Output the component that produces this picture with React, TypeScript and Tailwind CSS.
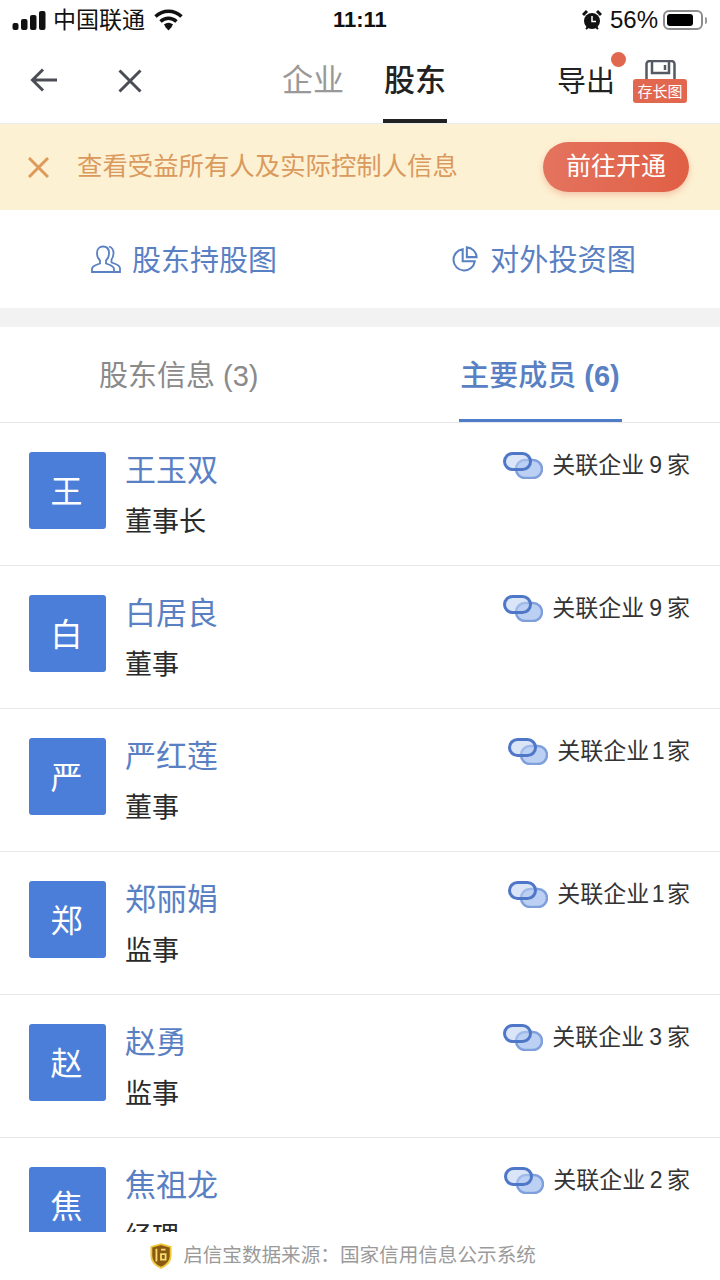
const cjk = "font-['Liberation_Sans','Noto_Sans_CJK_SC',sans-serif]";

type Member = {
  name: string;
  role: string;
  count: string;
  digit: string;
};

const members: Member[] = [
  { name: '王玉双', role: '董事长', count: '9', digit: 'mx-[5px]' },
  { name: '白居良', role: '董事', count: '9', digit: 'mx-[5px]' },
  { name: '严红莲', role: '董事', count: '1', digit: 'mx-[2.500px]' },
  { name: '郑丽娟', role: '监事', count: '1', digit: 'mx-[2.500px]' },
  { name: '赵勇', role: '监事', count: '3', digit: 'mx-[5px]' },
  { name: '焦祖龙', role: '经理', count: '2', digit: 'mx-[4.500px]' },
];

function StatusBar() {
  return (
    <div className="relative flex h-10 items-center justify-between pl-3 pr-[13px] text-[#111]">
      <div className="flex items-center">
        <svg width="34" height="20" viewBox="0 0 34 20" fill="#111">
          <rect x="0.5" y="13" width="6" height="7" rx="2" />
          <rect x="9" y="9" width="6.500" height="11" rx="2" />
          <rect x="18" y="5" width="6.500" height="15" rx="2" />
          <rect x="27" y="1" width="6.500" height="19" rx="2" />
        </svg>
        <span className="ml-[7px] text-[23px] leading-none">中国联通</span>
        <svg className="ml-[9px]" width="29" height="22" viewBox="0 0 29 22" fill="none" stroke="#111" strokeWidth="3.500">
          <path d="M1.500 7.500C9 .5 20 .5 27.500 7.500" />
          <path d="M6.500 12.500c4.800-4.300 11.200-4.300 16 0" />
          <path d="M11 17c2.300-1.800 4.700-1.800 7 0" />
          <path d="M14.500 21.500l-3.500-3.700c2.300-1.600 4.700-1.600 7 0z" fill="#111" stroke="none" />
        </svg>
      </div>
      <span className="absolute left-[333px] text-[22px] font-bold leading-none">11:11</span>
      <div className="flex items-center">
        <svg width="20" height="22" viewBox="0 0 20 22">
          <circle cx="10" cy="12" r="8" fill="#111" />
          <path d="M10 7v5.500h4" stroke="#fff" strokeWidth="1.500" fill="none" />
          <path d="M1 6l4-4M19 6l-4-4" stroke="#111" strokeWidth="3" />
          <path d="M4 20l2-2M16 20l-2-2" stroke="#111" strokeWidth="2" />
        </svg>
        <span className="ml-[8px] text-[24px] leading-none">56%</span>
        <div className="ml-[5px] flex h-[20px] w-[40px] items-center rounded-[6px] border-2 border-[#8c8c8c] p-[2px]">
          <div className="h-full w-[26px] rounded-[3px] bg-black" />
        </div>
        <div className="ml-[2px] h-[7px] w-[2px] rounded-r bg-[#999]" />
      </div>
    </div>
  );
}

function NavBar() {
  return (
    <div className="relative flex h-[84px] items-start border-b border-[#ececec]">
      <svg className="ml-[30px] mt-[27px]" width="28" height="26" viewBox="0 0 28 26" fill="none" stroke="#4a4d55" strokeWidth="3">
        <path d="M27 13H3M13 2.500L2.500 13 13 23.500" />
      </svg>
      <svg className="ml-[60px] mt-[29px]" width="24" height="24" viewBox="0 0 24 24" fill="none" stroke="#4a4d55" strokeWidth="3">
        <path d="M1.500 1.500l21 21M22.500 1.500l-21 21" />
      </svg>
      <span className="ml-[140px] mt-[19px] text-[31px] leading-[44px] text-[#999]">企业</span>
      <div className="ml-[39px] flex h-[83px] w-[64px] flex-col items-center justify-between">
        <span className="mt-[19px] text-[31px] font-medium leading-[44px] text-[#222]">股东</span>
        <div className="h-1 w-[64px] bg-[#222]" />
      </div>
      <span className="ml-[110px] mt-[21px] text-[29px] leading-[42px] text-[#222]">导出</span>
      <div className="absolute left-[611px] top-[12px] h-[15px] w-[15px] rounded-full bg-[#e2674f]" />
      <div className="absolute left-[633px] top-[20px] flex w-[54px] flex-col items-center">
        <svg width="31" height="21" viewBox="0 0 31 21" fill="none" stroke="#555964" strokeWidth="2.500">
          <path d="M1.500 21V4a3 3 0 0 1 3-3h22a3 3 0 0 1 3 3v17" />
          <path d="M7 2v11h17V2M20 5v5" />
        </svg>
        <div className="-mt-[2px] flex h-[24px] w-[54px] items-center justify-center rounded-[3px] bg-[#e2674f] text-[15px] leading-none text-white">
          存长图
        </div>
      </div>
    </div>
  );
}

function Banner() {
  return (
    <div className="flex h-[86px] items-center bg-[#fdf1d3]">
      <svg className="ml-[28px]" width="21" height="21" viewBox="0 0 21 21" fill="none" stroke="#dd9a5a" strokeWidth="3">
        <path d="M1 1l19 19M20 1L1 20" />
      </svg>
      <span className="ml-[28px] text-[25.400px] leading-none text-[#da9a5e]">查看受益所有人及实际控制人信息</span>
      <button className="ml-auto mr-[31px] h-[50px] w-[146px] rounded-full bg-gradient-to-r from-[#e4735e] to-[#e05f45] text-[25px] text-white shadow-[0_3px_6px_rgba(224,95,69,0.3)]">
        前往开通
      </button>
    </div>
  );
}

function ChartLinks() {
  return (
    <div className="flex h-[98px] items-center text-[#5a80c4]">
      <div className="ml-[91px] flex items-center">
        <svg width="30" height="28" viewBox="0 0 30 28" fill="none" stroke="#5a80c4" strokeWidth="1.800">
          <path d="M1 27v-3c0-2 1.500-3 4-4l4-1.500v-3C6.500 13.500 6 11 6 8c0-4 2.300-6.500 6-6.500s6 2.500 6 6.500c0 3-.5 5.500-3 7.500v3l4 1.500c2.500 1 4 2 4 4v3z" />
          <path d="M18 1.500c3 1 4.500 3.500 4.500 6.500 0 2.500-.5 4.500-2 6.500v3l4 1.500c2.500 1 4.500 2.500 4.500 4.500v3.500h-5" />
        </svg>
        <span className="ml-[11px] mt-[4px] text-[29px] leading-none">股东持股图</span>
      </div>
      <div className="ml-[175px] flex items-center">
        <svg width="26" height="26" viewBox="0 0 28 28" fill="none" stroke="#5a80c4" strokeWidth="2.200">
          <path d="M11.500 3.500a11.500 11.500 0 1 0 13 13h-13z" />
          <path d="M16 1.500a11 11 0 0 1 10.500 10.500H16z" />
        </svg>
        <span className="ml-[12px] mt-[4px] text-[29.200px] leading-none">对外投资图</span>
      </div>
    </div>
  );
}

function Tabs() {
  return (
    <div className="flex h-[96px] border-b border-[#e8e8e8] text-[29px] leading-none">
      <div className="ml-[99px] flex items-center pt-[4px] text-[#8a8a8a]">
        股东信息 (3)
      </div>
      <div className="ml-[200px] flex w-[163px] flex-col items-center justify-between">
        <span className="mt-[35px] text-[#5a80c4]">
          <span className="font-medium">主要成员</span> <span className="font-bold">(6)</span>
        </span>
        <div className="h-[3px] w-[163px] bg-[#4f7cc9]" />
      </div>
    </div>
  );
}

function LinkIcon() {
  return (
    <svg width="40" height="27" viewBox="0 0 40 27">
      <rect x="13" y="8" width="26" height="18" rx="9" fill="#bcd0f3" stroke="#7f9fdc" strokeWidth="2.500" />
      <rect x="1.500" y="1.500" width="26" height="16" rx="8" fill="#bcd0f3" fillOpacity="0.55" stroke="#4f77c8" strokeWidth="3" />
    </svg>
  );
}

function MemberRow({ member }: { member: Member }) {
  return (
    <div className="flex h-[143px] shrink-0 border-b border-[#e8e8e8] pl-[29px] pr-[30px]">
      <div className="mt-[29px] flex h-[77px] w-[77px] shrink-0 items-center justify-center rounded-[3px] bg-[#4a7ed8] pr-[2px] pt-[2px] text-[32px] leading-none text-white">
        {member.name[0]}
      </div>
      <div className="ml-[19px] mt-[27px]">
        <div className="text-[31px] leading-[42px] text-[#5a80c4]">{member.name}</div>
        <div className="mt-[11px] text-[27px] leading-[38px] text-[#2a2a2a]">{member.role}</div>
      </div>
      <div className="ml-auto mt-[27px] flex h-[30px] items-center">
        <LinkIcon />
        <span className="ml-[9px] text-[23px] leading-none text-[#333]">
          关联企业<span className={member.digit}>{member.count}</span>家
        </span>
      </div>
    </div>
  );
}

export default function App() {
  return (
    <div className={`${cjk} flex h-[1280px] w-[720px] flex-col overflow-hidden bg-white`}>
      <StatusBar />
      <NavBar />
      <Banner />
      <ChartLinks />
      <div className="h-[19px] bg-[#f2f2f2]" />
      <Tabs />
      <div className="flex h-[809px] flex-col overflow-hidden">
        {members.map((member) => (
          <MemberRow key={member.name} member={member} />
        ))}
      </div>
      <div className="flex h-12 items-center justify-center pr-[34px] text-[19.600px] leading-none text-[#9a9a9a]">
        <svg className="mr-[11px]" width="22" height="26" viewBox="0 0 24 28">
          <path d="M12 1l10.500 3v10c0 6-4 10-10.500 13C5.500 24 1.500 20 1.500 14V4z" fill="#8a5a12" stroke="#f0c93a" strokeWidth="2" />
          <path d="M7 6v14M12 7h5M12 12h5v6h-5z" fill="none" stroke="#f6dc6a" strokeWidth="2" />
        </svg>
        启信宝数据来源：国家信用信息公示系统
      </div>
    </div>
  );
}
